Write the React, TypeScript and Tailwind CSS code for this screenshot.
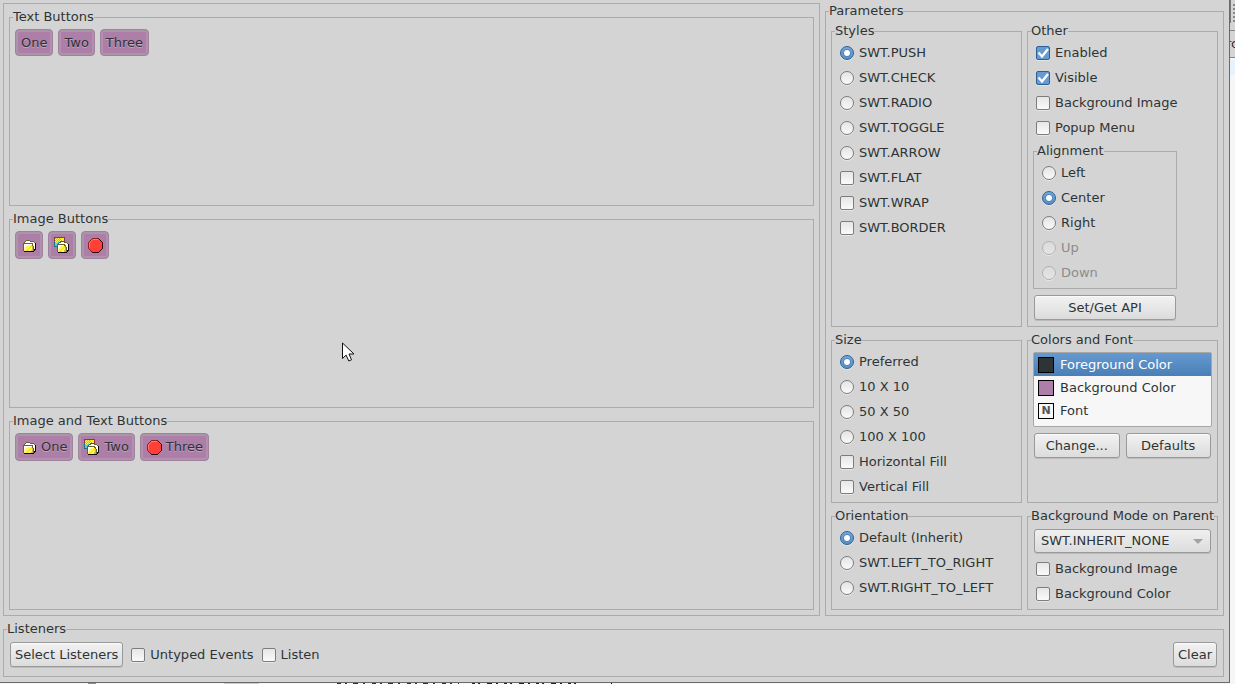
import type { ReactNode } from "react";
import clsx from "clsx";

type GroupProps = { title: string; className?: string; children?: ReactNode };

const Group = ({ title, className, children }: GroupProps) => (
  <fieldset className={clsx("min-w-0 border border-[#ababab]", className)}>
    <legend className="ml-[3px] pb-0.5 leading-[13px] whitespace-nowrap">{title}</legend>
    {children}
  </fieldset>
);

type OptionProps = { label: string; name?: string; checked?: boolean; disabled?: boolean };

const Radio = ({ label, name, checked, disabled }: OptionProps) => (
  <label className={clsx("flex h-[25px] items-center gap-[5px] pt-px pl-2", disabled && "text-[#8c8c8c]")}>
    <span className="grid shrink-0">
      <input
        type="radio"
        name={name}
        defaultChecked={checked}
        disabled={disabled}
        className="peer col-start-1 row-start-1 size-3.5 appearance-none rounded-full border border-[#7d7d7d] bg-linear-to-b from-[#e4e4e4] to-[#fafafa] shadow-[0_1px_0_#e6e6e6] checked:border-[#2d5f96] checked:from-[#78a8d8] checked:to-[#5b8fc6] disabled:border-[#b2b2b2] disabled:from-[#dcdcdc] disabled:to-[#e4e4e4]"
      />
      <span className="pointer-events-none col-start-1 row-start-1 m-auto hidden size-1.5 rounded-full bg-white shadow-[0_0_0_1px_#4f85bd] peer-checked:block" />
    </span>
    <span className="leading-4 whitespace-nowrap">{label}</span>
  </label>
);

const Check = ({ label, checked }: OptionProps) => (
  <label className="flex h-[25px] items-center gap-[5px] pt-px pl-2">
    <span className="grid shrink-0">
      <input
        type="checkbox"
        defaultChecked={checked}
        className="peer col-start-1 row-start-1 size-3.5 appearance-none rounded-xs border border-[#7d7d7d] bg-linear-to-b from-[#e6e6e6] to-[#fafafa] shadow-[0_1px_0_#e6e6e6] checked:border-[#2d5f96] checked:from-[#659bd1] checked:to-[#659bd1]"
      />
      <svg viewBox="0 0 14 14" className="pointer-events-none col-start-1 row-start-1 hidden size-3.5 peer-checked:block">
        <path d="M2.5 6.5 6 10.5 12 3" fill="none" stroke="#fff" strokeWidth="2.3" />
      </svg>
    </span>
    <span className="leading-4 whitespace-nowrap">{label}</span>
  </label>
);

const PushButton = ({ className, children }: { className?: string; children: ReactNode }) => (
  <button
    type="button"
    className={clsx(
      "h-[25px] rounded-[3px] border border-[#999] bg-linear-to-b from-[#f2f2f2] to-[#dcdcdc] leading-4 whitespace-nowrap shadow-[0_1px_0_#bcbcbc,inset_0_1px_0_#fafafa]",
      className
    )}
  >
    {children}
  </button>
);

const SampleButton = ({ label, icon, name }: { label?: string; icon?: ReactNode; name?: string }) => (
  <button
    type="button"
    aria-label={name}
    className={clsx(
      "flex items-center gap-1 rounded-[4px] border border-[#9f839d] bg-[#ad7fa8] px-[5px] text-[#2e3436] shadow-[inset_0_0_0_1px_#a896a6,inset_0_0_0_2px_#b48fb0,inset_0_-2px_0_#94808f] [text-shadow:0_1px_0_#c4a3c1]",
      icon ? "h-7" : "h-[27px]"
    )}
  >
    {icon}
    {label && <span className="leading-4">{label}</span>}
  </button>
);

const palette: Record<string, string> = {
  k: "#0c0c0c",
  g: "#6a6030",
  b: "#83403a",
  t: "#1f7478",
  c: "#43d6ee",
  w: "#ffffff",
  p: "#fffcc4",
  y: "#fff36a",
  Y: "#ffea00",
  o: "#d6ac48",
};

const PixelIcon = ({ rows }: { rows: string[] }) => (
  <svg viewBox="0 0 16 16" className="size-4 shrink-0" shapeRendering="crispEdges">
    {rows.flatMap((row, y) =>
      [...row].map((c, x) =>
        palette[c] ? <rect key={`${x}-${y}`} x={x} y={y} width="1" height="1" fill={palette[c]} /> : null
      )
    )}
  </svg>
);

const closedFolder = [
  "................",
  "................",
  "................",
  ".....gggg.......",
  "....gwwwwgggg...",
  "...gwwwwwwwwwg..",
  "..ggggggggggwwk.",
  "..gwwwwwwwpgwwk.",
  "..gwpppyyyYgwwk.",
  "..gwpyyyyYYogwk.",
  "..gpyyyyYYyogwk.",
  "..gpyyyYYyyogwk.",
  "..gyyyYYyyyogkk.",
  "..gyyYYyyyoogk..",
  "...kkkkkkkkkk...",
  "................",
];

const openFolder = [
  "bbbbbbbbbbb.....",
  "bcycycYYYyb.....",
  "bycycYcyYYb.....",
  "bcycycycyYb.....",
  "tycycybbbbb.....",
  "tcyccggwwwggg...",
  "tcccgwwwwwwwwg..",
  "tccggggggggwwwk.",
  "tccgwwwwwpggwwk.",
  "tttgwppyyyYgwwk.",
  "...gwpyyyYYogwk.",
  "...gpyyyYYyogwk.",
  "...gpyyYYyyogwk.",
  "...gyyYYyyoogkk.",
  "...gyYYyyyoogk..",
  "....kkkkkkkkk...",
];

const Target = () => (
  <svg viewBox="0 0 16 16" className="size-4 shrink-0">
    <path d="M5.5 1.5h6l4 4v6l-4 4h-6l-4-4v-6z" fill="#ff4038" stroke="#8b2420" />
    <path d="M11.5 1.5l4 4v6l-4 4h-6l-1-1" fill="none" stroke="#2a0b0b" />
    <path d="M2.5 10.5V6l3.5-3.5h5" fill="none" stroke="#ff7a6b" />
  </svg>
);

const ColorItem = ({ label, icon, selected }: { label: string; icon: ReactNode; selected?: boolean }) => (
  <li
    role="option"
    aria-selected={!!selected}
    className={clsx(
      "flex h-[23px] items-center gap-1.5 pl-1",
      selected && "bg-linear-to-b from-[#659ad1] to-[#4a7eb6] text-white"
    )}
  >
    {icon}
    <span className="leading-4">{label}</span>
  </li>
);

const Examples = () => (
  <div className="flex min-w-0 flex-1 flex-col gap-1.5 border border-[#ababab] px-[5px] pt-1.5 pb-[5px]">
    <Group title="Text Buttons" className="flex-1">
      <div className="flex gap-[5px] px-[5px] pt-1">
        <SampleButton label="One" />
        <SampleButton label="Two" />
        <SampleButton label="Three" />
      </div>
    </Group>
    <Group title="Image Buttons" className="flex-1">
      <div className="flex gap-[5px] px-[5px] pt-1">
        <SampleButton icon={<PixelIcon rows={closedFolder} />} name="Closed folder" />
        <SampleButton icon={<PixelIcon rows={openFolder} />} name="Open folder" />
        <SampleButton icon={<Target />} name="Target" />
      </div>
    </Group>
    <Group title="Image and Text Buttons" className="flex-1">
      <div className="flex gap-[5px] px-[5px] pt-1">
        <SampleButton label="One" icon={<PixelIcon rows={closedFolder} />} />
        <SampleButton label="Two" icon={<PixelIcon rows={openFolder} />} />
        <SampleButton label="Three" icon={<Target />} />
      </div>
    </Group>
  </div>
);

const Parameters = () => (
  <Group title="Parameters" className="mt-px w-[399px] shrink-0">
    <div className="grid grid-cols-2 gap-x-[5px] gap-y-1.5 p-[5px]">
      <Group title="Styles">
        <div className="pt-px">
          <Radio name="style" label="SWT.PUSH" checked />
          <Radio name="style" label="SWT.CHECK" />
          <Radio name="style" label="SWT.RADIO" />
          <Radio name="style" label="SWT.TOGGLE" />
          <Radio name="style" label="SWT.ARROW" />
          <Check label="SWT.FLAT" />
          <Check label="SWT.WRAP" />
          <Check label="SWT.BORDER" />
        </div>
      </Group>

      <Group title="Other">
        <div className="pt-px pb-1.5">
          <Check label="Enabled" checked />
          <Check label="Visible" checked />
          <Check label="Background Image" />
          <Check label="Popup Menu" />
          <Group title="Alignment" className="mt-1 ml-[5px] w-36">
            <div className="pt-px pb-[3px]">
              <Radio name="align" label="Left" />
              <Radio name="align" label="Center" checked />
              <Radio name="align" label="Right" />
              <Radio name="align" label="Up" disabled />
              <Radio name="align" label="Down" disabled />
            </div>
          </Group>
          <PushButton className="mt-1.5 ml-1.5 block w-[142px]">Set/Get API</PushButton>
        </div>
      </Group>

      <Group title="Size">
        <div className="pt-px pb-[3px]">
          <Radio name="size" label="Preferred" checked />
          <Radio name="size" label="10 X 10" />
          <Radio name="size" label="50 X 50" />
          <Radio name="size" label="100 X 100" />
          <Check label="Horizontal Fill" />
          <Check label="Vertical Fill" />
        </div>
      </Group>

      <Group title="Colors and Font">
        <div className="px-[5px] pt-1">
          <ul role="listbox" aria-label="Colors and Font" className="h-[75px] rounded-xs border border-[#a6a6a6] bg-[#f7f7f7]">
            <ColorItem selected label="Foreground Color" icon={<span className="size-4 border border-black bg-[#2e3436]" />} />
            <ColorItem label="Background Color" icon={<span className="size-4 border border-black bg-[#ad7fa8]" />} />
            <ColorItem
              label="Font"
              icon={
                <span className="flex size-4 items-center justify-center border border-black text-[11px] leading-none font-bold text-[#555]">
                  N
                </span>
              }
            />
          </ul>
          <div className="mt-1.5 grid grid-cols-2 gap-1.5 px-px">
            <PushButton>Change...</PushButton>
            <PushButton>Defaults</PushButton>
          </div>
        </div>
      </Group>

      <Group title="Orientation">
        <div className="pt-px">
          <Radio name="orientation" label="Default (Inherit)" checked />
          <Radio name="orientation" label="SWT.LEFT_TO_RIGHT" />
          <Radio name="orientation" label="SWT.RIGHT_TO_LEFT" />
        </div>
      </Group>

      <Group title="Background Mode on Parent">
        <div className="pt-[5px] pb-[3px]">
          <div className="mx-1.5 mb-[3px] grid">
            <select
              aria-label="Background Mode on Parent"
              className="col-start-1 row-start-1 h-6 appearance-none rounded-[3px] border border-[#999] bg-linear-to-b from-[#f0f0f0] to-[#dcdcdc] pl-1.5 leading-4 shadow-[0_1px_0_#bcbcbc]"
            >
              <option>SWT.INHERIT_NONE</option>
              <option>SWT.INHERIT_DEFAULT</option>
              <option>SWT.INHERIT_FORCE</option>
            </select>
            <svg viewBox="0 0 10 5" className="pointer-events-none col-start-1 row-start-1 mr-2 h-[5px] w-2.5 self-center justify-self-end">
              <path d="M0 0h10L5 5z" fill="#a3a3a3" />
            </svg>
          </div>
          <Check label="Background Image" />
          <Check label="Background Color" />
        </div>
      </Group>
    </div>
  </Group>
);

// Slice of the editor window that shows to the right of the shell
const EditorEdge = () => (
  <div className="w-[5px] shrink-0 overflow-hidden bg-[#f6f6f6]">
    <div className="flex h-[30px] justify-between bg-[#d4d4d4]">
      <span className="h-[23px] w-px bg-[#777]" />
      <span className="mt-1 h-[18px] border-l-2 border-dotted border-[#8f887c]" />
    </div>
    <div className="h-7 border-y border-[#888] bg-[#d4d4d4] leading-[26px]">
      <span className="-ml-1">rc</span>
    </div>
    <div className="mt-0.5 h-[15px] bg-[#e8f2fe]" />
  </div>
);

const Pointer = () => (
  <svg viewBox="0 0 13 21" className="pointer-events-none absolute top-[342px] left-[342px] h-[21px] w-[13px]">
    <path d="M.5 1v15.5l3.6-3.4L6.8 19l2.7-1.2L7 12h5z" fill="#fff" stroke="#111" />
  </svg>
);

export default function App() {
  return (
    <div className="relative bg-[#f6f6f6] font-['DejaVu_Sans','Verdana',sans-serif] text-[13px] text-[#2e3436]">
      <div className="flex">
        <main className="flex min-w-0 flex-1 flex-col gap-1.5 border-r border-b border-[#6a6a6a] bg-[#d4d4d4] pt-[3px] pr-[5px] pb-[5px] pl-[3px]">
          <div className="flex gap-[5px]">
            <Examples />
            <Parameters />
          </div>
          <Group title="Listeners">
            <div className="flex items-center px-1.5 pt-[5px] pb-[9px]">
              <PushButton className="px-1">Select Listeners</PushButton>
              <Check label="Untyped Events" />
              <Check label="Listen" />
              <PushButton className="ml-auto px-1">Clear</PushButton>
            </div>
          </Group>
        </main>
        <EditorEdge />
      </div>
      {/* tops of the source lines under the shell */}
      <svg className="block h-px w-full" shapeRendering="crispEdges">
        <path d="M88 .5h8" stroke="#b08a3c" />
        <path d="M224 .5h35" stroke="#ccc" />
        <path d="M337 .5h122" stroke="#7f0055" strokeDasharray="4 4 2 6 5 5 2 7" />
        <path d="M472 .5h110" stroke="#2a00c0" strokeDasharray="3 3 2 7 5 4 2 6" />
        <path d="M611 .5h1" stroke="#000" />
      </svg>
      <Pointer />
    </div>
  );
}
